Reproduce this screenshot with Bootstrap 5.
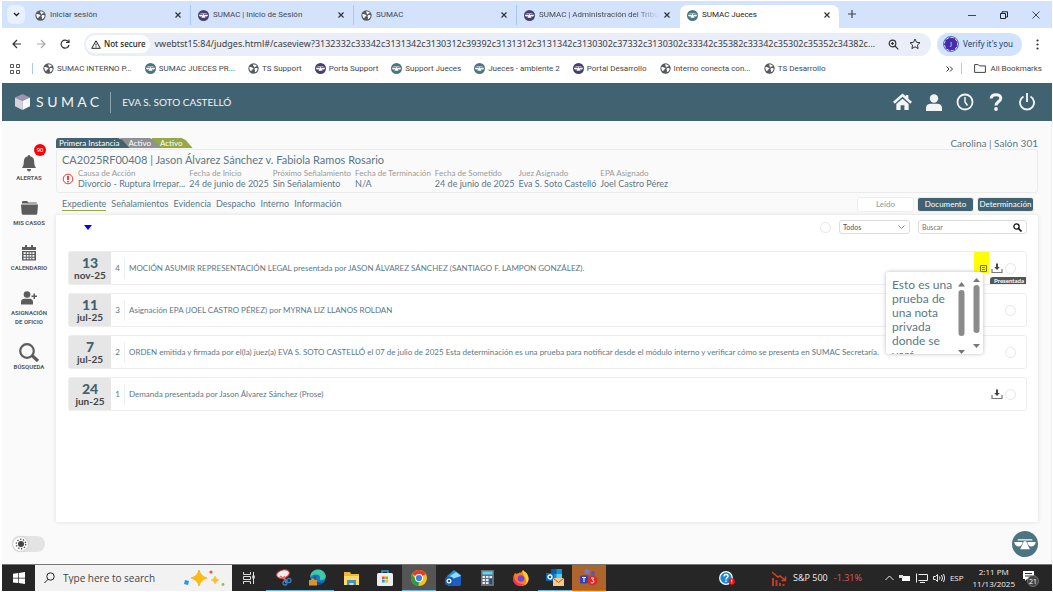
<!DOCTYPE html>
<html lang="es">
<head>
<meta charset="utf-8">
<meta name="viewport" content="width=device-width, initial-scale=1">
<title>SUMAC Jueces</title>
<link href="https://cdn.jsdelivr.net/npm/bootstrap@5.3.0/dist/css/bootstrap.min.css" rel="stylesheet">
<style>
:root{--teal:#416271;--ink:#5b7886;--icon:#5c5c5c}
body{font-family:Roboto,"Noto Sans",sans-serif;font-size:8px;line-height:12px;color:#45484c;background:#fff;padding:1px 1px 1px 2px}
button,a{color:inherit;text-decoration:none}
a:hover{color:inherit}
button{background:none;border:0;padding:0;line-height:inherit}
svg{display:block;flex:none}
.fav{width:11px;height:11px}
/* browser chrome */
.tabstrip{background:#d3e3fd;height:27px;padding:4px 4px 0 5px}
.chev-btn{width:18px;height:19px;border-radius:6px;background:#e9f1fe}
.tabs-run{margin-left:3px}
.tab-item{flex:0 1 163px;min-width:0;height:20px;padding:0 8px 0 7px;border-right:1px solid #a8c7fa}
.tab-item>span{min-width:0}
.tab-item:nth-child(4){border-color:transparent}
.tab-now{background:#fff;border:0;border-radius:7px 7px 0 0;height:23px;padding-bottom:3px;flex-basis:159px;color:#222}
.fade-end{-webkit-mask-image:linear-gradient(90deg,#000 80%,transparent);mask-image:linear-gradient(90deg,#000 80%,transparent)}
.addr{height:32px;padding:0 13px 0 10px}
.addr-nav{gap:14px;margin-right:14px}
.omni{background:#e9eef8;border-radius:12px;height:23px;padding:0 10px 0 2px}
.secure{background:#fff;border-radius:10px;height:18px;font:500 8px/18px "Noto Sans",sans-serif;color:#222;padding:0 5px;gap:3px}
.omni input{border:0;background:none;font:9px/18px "Noto Sans",sans-serif;color:#3c4043;padding:0;outline:0;text-overflow:ellipsis}
.omni-tools{gap:10px;margin-left:13px}
.verify{background:#d3e3fd;border-radius:12px;height:23px;font:8px/12px "Noto Sans",sans-serif;color:#20406f;padding:0 9px 0 7px;gap:5px;margin:0 14px 0 6px}
.avatar{width:14px;height:14px;border-radius:50%;background:#4b2aa8;border:1px dashed #d3e3fd;outline:1px solid #4b6fc0;color:#fff;font-size:6px;line-height:12px}
.bookmarks{height:23px;padding:0 10px 6px 8px}
.bm{display:flex;align-items:center;gap:3px;margin-right:13px;white-space:nowrap}
.vline{width:1px;height:11px;background:#a8c7fa}
.vline.first{margin:0 10px 0 12px}
/* application */
.app-head{background:var(--teal);height:38px;color:#f4f4f4;padding:0 10px 0 13px;font-family:Lato,sans-serif}
.brand{font-size:14px;margin-left:6px}
.brand-rule{width:1px;height:21px;background:#8fa4ad;margin:0 11px}
.who{font-size:10px}
.app-tools button{width:31px;display:flex;justify-content:center}
.app-main{background:#fafafa;color:var(--ink);font-family:Lato,"Noto Sans",sans-serif;border-right:1px solid #eee}
.side{width:54px;color:var(--icon);padding-top:32px}
.side>a{font:700 6px/9px Roboto,sans-serif;text-align:center;margin-bottom:16px}
.side i{display:flex;height:20px;align-items:center;justify-content:center}
.alert-count{position:absolute;left:32px;top:-9px;width:12px;height:12px;border-radius:50%;background:red;color:#fff;font:6px/12px Roboto,sans-serif}
.work{padding:16px 13px 0 0}
.folder{height:11px;font-size:8px;line-height:10px;color:#fff}
.folder span{height:10px;clip-path:polygon(0 0,calc(100% - 11px) 0,calc(100% - 7px) 2px,100% 100%,0 100%);padding:0 10px 0 3px;margin-right:-9px;position:relative}
.f1{background:var(--teal);border-radius:3px 0 0;z-index:3}
.folder .f2{background:#8f9293;z-index:2;padding-left:8px}
.folder .f3{background:#95a843;z-index:1;padding-left:8px}
.room{font-size:10px}
.case-box{border:1px solid #ebebeb;border-radius:3px;height:44px;padding:2px 5px}
.case-title{font-size:11px;line-height:15px;margin:0 0 2px;font-weight:400}
.facts{font-size:9px;line-height:11px}
.facts>div{margin-right:4px;white-space:nowrap}
.facts dt{font-weight:400;font-size:8px;color:#999b98;line-height:9px}
.facts dd{margin:0}
.section-nav{font-size:9px;line-height:12px;height:22px}
.links{gap:5px;padding-left:6px}
.section-nav .now{border-bottom:1px solid #95a843}
.acts{gap:3px}
.act{width:57px;height:15px;border-radius:3px;background:var(--teal);color:#fff;font-size:8px;line-height:13px;border:1px solid #eee}
.act.plain{background:#fff;color:#8799a1}
.sheet{background:#fff;box-shadow:0 0 4px #ddd;border-radius:2px;height:307px;padding:5px 11px 0 12px}
.tick{appearance:none;width:11px;height:11px;border:1px solid #e6e6e6;border-radius:50%;background:#fff;margin:0;flex:none}
.field{height:14px;border:1px solid #ddd;border-radius:3px;background:#fff}
.field select,.field input{border:0;background:none;font-size:7px;line-height:12px;height:12px;min-width:0;padding:0 3px;outline:0;color:#555;appearance:none}
.sel{width:71px}
.srch{width:109px}
.list{margin-top:17px}
.entry{height:34px;border:1px solid #eee;border-radius:3px;position:relative;background:#fff}
.desc{white-space:nowrap}
.tools{gap:2px;padding-right:10px}
.stamp{width:42px;background:#e6e6e6;color:#444;font-weight:700;font-size:10px;line-height:12px;text-align:center;padding-top:4px}
.stamp b{display:block;font-size:14px;line-height:13px;color:var(--teal)}
.num{width:14px;height:21px;line-height:21px;border-right:1px solid #eee;text-align:center}
.flag{position:absolute;right:0;bottom:0;background:#555;color:#fff;font-size:6px;line-height:7px;padding:0 2px 0 4px;border-radius:3px 0 0;font-weight:700}
.mark-note{position:absolute;right:37px;top:0;width:15px;height:21px;background:#ff0;padding:11px 0 0 6px}
.note{position:absolute;z-index:5;right:43px;top:20px;width:97px;height:82px;background:#fff;box-shadow:0 0 4px #bbb;border-radius:3px;overflow:hidden;padding:6px 0 0 6px;font-size:12px;line-height:14px}
.foot{padding:0 13px 7px 10px}
.switch-pill{width:33px;height:16px;border-radius:8px;background:#e3e3e3;padding:1px}
.switch-pill span{width:15px;height:14px;border-radius:50%;background:#fff;box-shadow:0 0 2px #aaa}
/* taskbar */
.taskbar{background:#262626;height:27px;color:#eee;border-top:1px solid #777;font-family:"Open Sans",sans-serif}
.start{width:33px}
.find{width:197px;background:#f2f2f2;color:#444;padding:0 7px 0 9px}
.find input{border:0;background:none;font-size:10px;padding:0;color:#444;outline:0}
.find input::placeholder{color:#444;opacity:1}
.slot{width:34px;height:26px;display:flex;align-items:center;justify-content:center}
.slot.open{border-bottom:1px solid #6cb0ea}
.slot.front{background:#555;border-bottom:1px solid #6cb0ea}
.slot.ping{background:#ad652c;border-bottom:1px solid #f60}
.tray{gap:5px;padding-right:13px}
.stock{gap:6px;font-size:9px;margin:0 18px 0 32px}
.down{color:#e05a5a}
.clock{line-height:12px;margin:0 2px 0 4px}
</style>
</head>
<body class="min-vh-100 d-flex flex-column">
<svg width="0" height="0" class="position-absolute" aria-hidden="true">
<symbol id="globe" viewBox="0 0 16 16"><circle cx="8" cy="8" r="7.500" fill="#56595d"/><path d="M2 6c2-.5 3 .8 5 1 1.500.2 1 2-.5 2.500-1.500.5-1 2-2 2.500C3 11 2 9 2 6ZM7 2.500c2-1 5-.2 6 2-1 1-2 .2-3 1.500-1 .8-2-.2-1.500-1C9 4 7.500 4 7 2.500ZM10 8c1.500-1 3-.5 4 0 0 3-2 5-4 5.500-.5-1.500 1-2 0-3-.6-.8-.8-1.800 0-2.500Z" fill="#fff"/></symbol>
<symbol id="scales" viewBox="0 0 16 16"><circle cx="8" cy="8" r="8" fill="currentColor"/><path d="M3.500 5h9v.8h-9zM1.400 6.800h5.200C6.300 8.800 5 9.600 4 9.600s-2.300-.8-2.600-2.800ZM9.400 6.800h5.200c-.3 2-1.600 2.800-2.600 2.800s-2.300-.8-2.600-2.800ZM7.300 6.300h1.400l2.300 5H5z" fill="#fff"/></symbol>
<symbol id="x" viewBox="0 0 8 8"><path d="M1.500 1.500l5 5M6.500 1.500l-5 5" stroke="#333" stroke-width="1.200"/></symbol>
<symbol id="dl" viewBox="0 0 12 12"><path d="M1 7v3.500h10V7" fill="none" stroke="#777" stroke-width="1.200"/><path d="M5 1.500h2V5h1.800L6 8 3.200 5H5z" fill="#444"/></symbol>
</svg>

<header>
<div class="tabstrip d-flex">
<button class="chev-btn d-flex align-items-center justify-content-center" aria-label="Buscar pestañas"><svg width="7" height="5" viewBox="0 0 7 5"><path d="M1 1l2.500 2.500L6 1" fill="none" stroke="#222" stroke-width="1.300"/></svg></button>
<div class="tabs-run d-flex flex-grow-1">
<div class="tab-item d-flex align-items-center gap-1"><svg class="fav"><use href="#globe"/></svg><span class="flex-grow-1">Iniciar sesión</span><svg width="8" height="8"><use href="#x"/></svg></div>
<div class="tab-item d-flex align-items-center gap-1"><svg class="fav" color="#45406c"><use href="#scales"/></svg><span class="flex-grow-1">SUMAC | Inicio de Sesión</span><svg width="8" height="8"><use href="#x"/></svg></div>
<div class="tab-item d-flex align-items-center gap-1"><svg class="fav"><use href="#globe"/></svg><span class="flex-grow-1">SUMAC</span><svg width="8" height="8"><use href="#x"/></svg></div>
<div class="tab-item d-flex align-items-center gap-1"><svg class="fav" color="#45406c"><use href="#scales"/></svg><span class="flex-grow-1 text-nowrap overflow-hidden fade-end">SUMAC | Administración del Tribunal</span><svg width="8" height="8"><use href="#x"/></svg></div>
<div class="tab-item tab-now d-flex align-items-center gap-1"><svg class="fav" color="#4d7482"><use href="#scales"/></svg><span class="flex-grow-1">SUMAC Jueces</span><svg width="8" height="8"><use href="#x"/></svg></div>
<button class="ms-2 align-self-start pt-1" aria-label="Nueva pestaña"><svg width="10" height="10" viewBox="0 0 10 10"><path d="M5 1v8M1 5h8" stroke="#444" stroke-width="1.200"/></svg></button>
</div>
<div class="d-flex align-items-center gap-4 pb-1 pe-2">
<button aria-label="Minimizar"><svg width="8" height="8"><path d="M0 4.500h8" stroke="#444"/></svg></button>
<button aria-label="Restaurar"><svg width="8" height="8"><path d="M.5 2.500h5v5h-5zM2 2.500V.8h5.500V6H6" fill="none" stroke="#222"/></svg></button>
<button aria-label="Cerrar"><svg width="8" height="8"><path d="M.5.5l7 7M7.500.5l-7 7" stroke="#333" stroke-width=".9"/></svg></button>
</div>
</div>

<div class="addr d-flex align-items-center">
<div class="addr-nav d-flex align-items-center">
<svg width="10" height="10" viewBox="0 0 10 10"><path d="M5 1L1 5l4 4M1 5h8" fill="none" stroke="#333" stroke-width="1.200"/></svg>
<svg width="10" height="10" viewBox="0 0 10 10"><path d="M5 1l4 4-4 4M9 5H1" fill="none" stroke="#aaa" stroke-width="1.200"/></svg>
<svg width="10" height="10" viewBox="0 0 10 10"><path d="M8.500 3A4 4 0 1 0 9 6M9 .5v3H6" fill="none" stroke="#333" stroke-width="1.200"/></svg>
</div>
<div class="omni d-flex align-items-center flex-grow-1">
<span class="secure d-flex align-items-center"><svg width="10" height="9" viewBox="0 0 10 9"><path d="M5 .8L9.300 8.300H.7zM5 3.500v2.200M5 6.400v1" fill="none" stroke="#222"/></svg>Not secure</span>
<input class="flex-grow-1 ms-1" aria-label="Dirección" value="vwebtst15:84/judges.html#/caseview?3132332c33342c3131342c3130312c39392c3131312c3131342c3130302c37332c3130302c33342c35382c33342c35302c35352c34382c33312c3131">
<div class="omni-tools d-flex align-items-center">
<svg width="11" height="11" viewBox="0 0 11 11"><circle cx="4.500" cy="4.500" r="3.300" fill="none" stroke="#333" stroke-width="1.200"/><path d="M7 7l3.300 3.300M3 4.500h3M4.500 3v3" stroke="#333" stroke-width="1.200"/></svg>
<svg width="12" height="12" viewBox="0 0 12 12"><path d="M6 1l1.500 3.300 3.500.4-2.600 2.400.7 3.500L6 8.800l-3.100 1.800.7-3.500L1 4.700l3.500-.4z" fill="none" stroke="#333"/></svg>
</div>
</div>
<button class="verify d-flex align-items-center"><span class="avatar">J</span>Verify it's you</button>
<svg width="3" height="11" fill="#333"><circle cx="1.500" cy="1.500" r="1.100"/><circle cx="1.500" cy="5.500" r="1.100"/><circle cx="1.500" cy="9.500" r="1.100"/></svg>
</div>

<nav class="bookmarks d-flex align-items-center">
<svg width="10" height="10" viewBox="0 0 10 10"><path d="M.5.5h3v3h-3zM6.500.5h3v3h-3zM.5 6.500h3v3h-3zM6.500 6.500h3v3h-3z" fill="none" stroke="#555"/></svg>
<span class="vline first"></span>
<div class="d-flex flex-grow-1">
<a href="#" class="bm"><svg class="fav"><use href="#globe"/></svg>SUMAC INTERNO P...</a>
<a href="#" class="bm"><svg class="fav" color="#4d7482"><use href="#scales"/></svg>SUMAC JUECES PR...</a>
<a href="#" class="bm"><svg class="fav"><use href="#globe"/></svg>TS Support</a>
<a href="#" class="bm"><svg class="fav" color="#45406c"><use href="#scales"/></svg>Porta Support</a>
<a href="#" class="bm"><svg class="fav" color="#4d7482"><use href="#scales"/></svg>Support Jueces</a>
<a href="#" class="bm"><svg class="fav" color="#4d7482"><use href="#scales"/></svg>Jueces - ambiente 2</a>
<a href="#" class="bm"><svg class="fav" color="#45406c"><use href="#scales"/></svg>Portal Desarrollo</a>
<a href="#" class="bm"><svg class="fav"><use href="#globe"/></svg>Interno conecta con...</a>
<a href="#" class="bm"><svg class="fav"><use href="#globe"/></svg>TS Desarrollo</a>
</div>
<svg width="7" height="6" viewBox="0 0 7 6"><path d="M.5.5L3 3 .5 5.500M4 .5L6.500 3 4 5.500" fill="none" stroke="#333"/></svg>
<span class="vline mx-2"></span>
<a href="#" class="d-flex align-items-center gap-1 ms-1"><svg width="12" height="9" viewBox="0 0 12 9"><path d="M.6.6h3.600l1.200 1.300h6v6.500H.6z" fill="none" stroke="#444"/></svg>All Bookmarks</a>
</nav>

<div class="app-head d-flex align-items-center">
<svg width="15" height="16" viewBox="0 0 15 16"><path d="M7.500 0L15 3.500 7.500 7 0 3.500z" fill="#9b96ab"/><path d="M0 3.500L7.500 7v9L0 12.200z" fill="#d5d2dc"/><path d="M15 3.500L7.500 7v9l7.500-3.800z" fill="#f8f8fa"/></svg>
<span class="brand">S U M A C</span><span class="brand-rule"></span><span class="who">EVA S. SOTO CASTELLÓ</span>
<div class="d-flex align-items-center ms-auto app-tools">
<button aria-label="Inicio"><svg width="19" height="18" viewBox="0 0 20 18" fill="currentColor"><path d="M10 0l3.500 3V1.500h2.700v4L20 8.800 18.200 10.800 10 3.600 1.800 10.800 0 8.800z"/><path d="M10 5.500l6.500 5.700v6.300h-4.500V12.500H8v5H3.500v-6.300z"/></svg></button>
<button aria-label="Usuario"><svg width="16" height="17" viewBox="0 0 16 17" fill="currentColor"><circle cx="8" cy="4.500" r="4.200"/><path d="M0 17v-3c0-3 2-4.300 5-4.300h6c3 0 5 1.300 5 4.300v3z"/></svg></button>
<button aria-label="Historial"><svg width="18" height="18" viewBox="0 0 18 18"><circle cx="9" cy="9" r="7.500" fill="none" stroke="currentColor" stroke-width="1.800"/><path d="M9 4v5l2.500 3.500" fill="none" stroke="currentColor" stroke-width="1.500"/></svg></button>
<button aria-label="Ayuda"><svg width="14" height="18" viewBox="0 0 14 18"><path d="M2.200 5.500C2.500.5 11.800.5 11.800 5.200c0 3.300-4.800 3.300-4.800 7.300" fill="none" stroke="currentColor" stroke-width="3"/><circle cx="7" cy="16" r="1.900" fill="currentColor"/></svg></button>
<button aria-label="Salir"><svg width="16" height="18" viewBox="0 0 16 18"><path d="M4.500 3.500a7 7 0 1 0 7 0M8 0v9" fill="none" stroke="currentColor" stroke-width="1.900"/></svg></button>
</div>
</div>
</header>

<main class="app-main d-flex flex-column flex-grow-1">
<div class="d-flex">
<nav class="side d-flex flex-column">
<a href="#" class="position-relative"><i><svg width="14" height="17" viewBox="0 0 14 17" fill="currentColor"><path d="M7 0c.8 0 1.200.6 1.200 1.300 3 .7 4 3 4 5.700 0 3 .6 4.500 1.800 6H0c1.200-1.500 1.800-3 1.800-6 0-2.700 1-5 4-5.700C5.800.6 6.200 0 7 0ZM5 14h4c0 1.600-.8 2.500-2 2.500S5 15.600 5 14Z"/></svg></i><span class="alert-count">90</span>ALERTAS</a>
<a href="#"><i><svg width="17" height="14" viewBox="0 0 17 14" fill="currentColor"><path d="M1 1q0-1 1-1h4l1.500 1.500H15q1 0 1 1H1zM0 3.500h17l-.7 9q-.1 1.200-1.300 1.200H2q-1.200 0-1.300-1.200z"/></svg></i>MIS CASOS</a>
<a href="#"><i><svg width="14" height="16" viewBox="0 0 14 16" fill="currentColor"><path d="M3 0h2v2h4V0h2v2h3v3H0V2h3zM0 6h14v9.500H0zM1.500 7.200v1.800h2.300V7.200zm3.300 0v1.800h1.800V7.200zm2.800 0v1.800h1.800V7.200zm2.800 0v1.800h2V7.200zM1.500 10v1.700h2.300V10zm3.300 0v1.700h1.800V10zm2.800 0v1.700h1.800V10zm2.800 0v1.700h2V10zM1.500 12.700v1.500h2.300v-1.500zm3.300 0v1.500h1.800v-1.500zm2.800 0v1.500h1.800v-1.500zm2.800 0v1.500h2v-1.500z" fill-rule="evenodd"/></svg></i>CALENDARIO</a>
<a href="#"><i><svg width="16" height="14" viewBox="0 0 16 14" fill="currentColor"><circle cx="6" cy="3.500" r="3.300"/><path d="M0 13.500V11c0-2.300 1.600-3.200 3.500-3.200h5c2 0 3.500.9 3.500 3.200v2.500zM12.500 2.500H14v2h2V6h-2v2h-1.500V6h-2V4.500h2z"/></svg></i>ASIGNACIÓN<br>DE OFICIO</a>
<a href="#"><i><svg width="20" height="19" viewBox="0 0 20 19"><circle cx="8" cy="8" r="6.800" fill="none" stroke="currentColor" stroke-width="2.200"/><path d="M13 12.500l6 5.500" stroke="currentColor" stroke-width="3.200"/></svg></i>BÚSQUEDA</a>
</nav>

<div class="work flex-grow-1">
<div class="d-flex justify-content-between">
<div class="folder d-flex align-items-end"><span class="f1">Primera Instancia</span><span class="f2">Activo</span><span class="f3">Activo</span></div>
<div class="room">Carolina | Salón 301</div>
</div>
<section class="case-box">
<h1 class="case-title">CA2025RF00408 | Jason Álvarez Sánchez v. Fabiola Ramos Rosario</h1>
<dl class="facts d-flex mb-0">
<svg class="me-1 align-self-center" width="12" height="12" viewBox="0 0 12 12"><circle cx="6" cy="6" r="4.800" fill="none" stroke="#f33"/><path d="M6 3v4M6 8v1.200" stroke="#e00" stroke-width="1.500"/></svg>
<div><dt>Causa de Acción</dt><dd>Divorcio - Ruptura Irrepar...</dd></div>
<div><dt>Fecha de Inicio</dt><dd>24 de junio de 2025</dd></div>
<div><dt>Próximo Señalamiento</dt><dd>Sin Señalamiento</dd></div>
<div><dt>Fecha de Terminación</dt><dd>N/A</dd></div>
<div><dt>Fecha de Sometido</dt><dd>24 de junio de 2025</dd></div>
<div><dt>Juez Asignado</dt><dd>Eva S. Soto Castelló</dd></div>
<div><dt>EPA Asignado</dt><dd>Joel Castro Pérez</dd></div>
</dl>
</section>
<div class="section-nav d-flex align-items-center">
<nav class="d-flex links"><a href="#" class="now">Expediente</a><a href="#">Señalamientos</a><a href="#">Evidencia</a><a href="#">Despacho</a><a href="#">Interno</a><a href="#">Información</a></nav>
<div class="d-flex ms-auto pe-1 acts"><button class="act plain">Leído</button><button class="act">Documento</button><button class="act">Determinación</button></div>
</div>
<section class="sheet">
<div class="d-flex align-items-center">
<svg class="ms-3" width="8" height="5"><path d="M0 0h8L4 5z" fill="#00f"/></svg>
<input type="checkbox" class="tick ms-auto me-2" aria-label="Seleccionar todos">
<div class="field d-flex align-items-center me-2 pe-1 sel"><select class="flex-grow-1" aria-label="Filtro"><option>Todos</option></select><svg width="7" height="5"><path d="M.5.5l3 3 3-3" fill="none" stroke="#888"/></svg></div>
<div class="field d-flex align-items-center pe-1 srch"><input class="flex-grow-1" placeholder="Buscar" aria-label="Buscar"><svg width="9" height="9"><circle cx="3.500" cy="3.500" r="2.600" fill="none" stroke="#111" stroke-width="1.300"/><path d="M5.500 5.500L8.500 8.500" stroke="#111" stroke-width="1.700"/></svg></div>
</div>
<div class="d-flex flex-column gap-2 list">
<article class="entry d-flex align-items-center">
<div class="stamp h-100"><b>13</b>nov-25</div><div class="num">4</div><div class="ps-1 desc">MOCIÓN ASUMIR REPRESENTACIÓN LEGAL presentada por JASON ÁLVAREZ SÁNCHEZ (SANTIAGO F. LAMPON GONZÁLEZ).</div>
<div class="ms-auto d-flex align-items-center tools"><svg width="12" height="12"><use href="#dl"/></svg><input type="checkbox" class="tick" aria-label="Seleccionar 4"></div>
<span class="flag">Presentada</span>
<button class="mark-note" aria-label="Nota privada"><svg width="7" height="7"><path d="M.5.5h6v6h-6zM2 2.500h3M2 4.500h3" fill="none" stroke="#77701a"/></svg></button>
<aside class="note d-flex"><div class="flex-grow-1">Esto es una prueba de una nota privada donde se verá</div>
<svg width="14" height="76" viewBox="0 0 14 76"><path d="M4 8.500h7L7.500 4zM4 72h7l-3.500 4z" fill="#777"/><rect x="4.500" y="12" width="6" height="46" rx="3" fill="#8b8b8b"/></svg>
<svg width="15" height="76" viewBox="0 0 15 76"><path d="M5 4h7L8.500 0zM5 66h7l-3.500 4z" fill="#777"/><rect x="5.500" y="7" width="6" height="48" rx="3" fill="#8b8b8b"/></svg></aside>
</article>
<article class="entry d-flex align-items-center">
<div class="stamp h-100"><b>11</b>jul-25</div><div class="num">3</div><div class="ps-1 desc">Asignación EPA (JOEL CASTRO PÉREZ) por MYRNA LIZ LLANOS ROLDAN</div>
<div class="ms-auto tools d-flex"><input type="checkbox" class="tick" aria-label="Seleccionar 3"></div>
</article>
<article class="entry d-flex align-items-center">
<div class="stamp h-100"><b>7</b>jul-25</div><div class="num">2</div><div class="ps-1 desc">ORDEN emitida y firmada por el(la) juez(a) EVA S. SOTO CASTELLÓ el 07 de julio de 2025 Esta determinación es una prueba para notificar desde el módulo interno y verificar cómo se presenta en SUMAC Secretaría.</div>
<div class="ms-auto tools d-flex"><input type="checkbox" class="tick" aria-label="Seleccionar 2"></div>
</article>
<article class="entry d-flex align-items-center">
<div class="stamp h-100"><b>24</b>jun-25</div><div class="num">1</div><div class="ps-1 desc">Demanda presentada por Jason Álvarez Sánchez (Prose)</div>
<div class="ms-auto d-flex align-items-center tools"><svg width="12" height="12"><use href="#dl"/></svg><input type="checkbox" class="tick" aria-label="Seleccionar 1"></div>
</article>
</div>
</section>
</div>
</div>
<div class="d-flex justify-content-between align-items-center mt-auto foot">
<button class="switch-pill d-flex" aria-label="Modo oscuro"><span class="d-flex align-items-center justify-content-center"><svg width="12" height="12" viewBox="0 0 12 12"><circle cx="6" cy="6" r="3" fill="#444"/><circle cx="6" cy="6" r="4.700" fill="none" stroke="#444" stroke-width="1.400" stroke-dasharray="1.300 1.650"/></svg></span></button>
<button aria-label="Asistente"><svg width="26" height="26" color="#4d7482"><use href="#scales"/></svg></button>
</div>
</main>

<footer class="taskbar d-flex align-items-center">
<button class="start d-flex justify-content-center" aria-label="Inicio de Windows"><svg width="12" height="12" viewBox="0 0 12 12" fill="#fff"><path d="M0 1.700L5 1v4.700H0zM5.700.9L12 0v5.700H5.700zM0 6.400h5v4.700l-5-.7zM5.700 6.400H12V12l-6.300-.9z"/></svg></button>
<div class="find d-flex align-items-center h-100"><svg width="11" height="12" viewBox="0 0 11 12"><circle cx="6.500" cy="4.500" r="3.700" fill="none" stroke="#222"/><path d="M4 7.300L.5 11" stroke="#222"/></svg><input class="ms-2 flex-grow-1 w-50" placeholder="Type here to search" aria-label="Type here to search">
<svg width="42" height="18" viewBox="0 0 42 18"><path d="M16 1q1.500 6.500 8 8-6.500 1.500-8 8-1.500-6.500-8-8 6.500-1.500 8-8Z" fill="#fbb913" stroke="#fbb913"/><path d="M32 7q.8 3.200 4 4-3.200.8-4 4-.8-3.200-4-4 3.200-.8 4-4Z" fill="#fbc02d" stroke="#fbc02d" stroke-width=".5"/><path d="M2 11l4 1-1 4-4-1z" fill="#1e9be8"/><circle cx="28" cy="3" r="1.600" fill="#f2572b"/><circle cx="40" cy="15.500" r="1.400" fill="#8bc34a"/></svg></div>
<div class="d-flex">
<button class="slot" aria-label="Vista de tareas"><svg width="12" height="12" viewBox="0 0 12 12" fill="none" stroke="#ddd"><path d="M.5 0v2.500h7V0M.5 12V9.500h7V12M.5 4.500h7v3h-7zM10.500 0v12"/><path d="M10.500 3.500v3" stroke-width="2.500"/></svg></button>
<button class="slot open" aria-label="Recortes"><svg width="17" height="17" viewBox="0 0 17 17"><ellipse cx="8" cy="5" rx="6.500" ry="4" fill="#eee" stroke="#d33" transform="rotate(-15 8 5)"/><path d="M5 7l7 5M9 7l2 7" stroke="#e66" stroke-width="1.500"/><circle cx="10" cy="14" r="2" fill="none" stroke="#2d84c7" stroke-width="1.300"/><circle cx="14" cy="11.500" r="2" fill="none" stroke="#2d84c7" stroke-width="1.300"/></svg></button>
<button class="slot open" aria-label="Edge"><svg width="17" height="17" viewBox="0 0 17 17"><circle cx="9" cy="8" r="7.800" fill="#1478c9"/><path d="M1.500 6C3-.5 15-2 16.800 7c.2 4-4.300 4.500-6.300 3.500 1.500-3-.5-5-3.500-5-2 0-4 .3-5.500 3z" fill="#42c9a0"/><path d="M7 7c-2 4 1 8 7.500 6-3 3.500-9 3-10 0C3.500 10 5 7.500 7 7Z" fill="#0d479b"/><path d="M0 11h8v5.500H0zM2.500 11V9.500h3V11" fill="#d6952b"/></svg></button>
<button class="slot" aria-label="Explorador"><svg width="15" height="13" viewBox="0 0 15 13"><path d="M0 0h6l1 2h8v11H0z" fill="#f3b62c"/><path d="M0 4h15v9H0z" fill="#ffd968"/><path d="M3 13V8h9v5H9.500v-2h-4v2z" fill="#3b94d9"/></svg></button>
<button class="slot" aria-label="Tienda"><svg width="16" height="16" viewBox="0 0 16 16"><path d="M5 4V1h6v3" fill="none" stroke="#2aa3d8" stroke-width="1.500"/><rect y="3" width="16" height="13" rx="1.500" fill="#eee"/><path d="M5 6.500h2.700v2.700H5z" fill="#f35325"/><path d="M8.300 6.500H11v2.700H8.300z" fill="#81bc06"/><path d="M5 9.800h2.700v2.700H5z" fill="#05a6f0"/><path d="M8.300 9.800H11v2.700H8.300z" fill="#ffba08"/></svg></button>
<button class="slot front" aria-label="Chrome"><svg width="16" height="16" viewBox="0 0 16 16"><circle cx="8" cy="8" r="8" fill="#fbc116"/><path d="M8 8L1.100 4A8 8 0 0 1 14.900 4z" fill="#e33b2e"/><path d="M1.100 4L5 10.500 8 12l-.6 4A8 8 0 0 1 1.100 4Z" fill="#259d4a"/><circle cx="8" cy="8" r="4" fill="#fff"/><circle cx="8" cy="8" r="3.100" fill="#3c7de6"/></svg></button>
<button class="slot" aria-label="Outlook nuevo"><svg width="17" height="17" viewBox="0 0 17 17"><path d="M2 6L9 0l7 5v8q0 3-3 3H4q-2 0-2-2z" fill="#2389e5"/><path d="M5 6l6-4 5 4-5 5z" fill="#8fdcff"/><path d="M4 10l12-4v7q0 3-3 3H4z" fill="#205cc2"/><rect y="7" width="8" height="8" rx="1.500" fill="#1559b5"/><circle cx="4" cy="11" r="1.900" fill="none" stroke="#fff" stroke-width="1.200"/></svg></button>
<button class="slot" aria-label="Calculadora"><svg width="13" height="16" viewBox="0 0 13 16"><path d="M0 0h13v16H0z" fill="#65707a"/><path d="M1.500 1.500h10v3h-10z" fill="#5fd3f4"/><path d="M1.500 6h2.500v2H1.500zM5 6h2.500v2H5zM8.500 6H11v2H8.500zM1.500 9h2.500v2H1.500zM5 9h2.500v2H5zM1.500 12h2.500v2H1.500zM5 12h2.500v2H5z" fill="#e8ecef"/><path d="M8.500 9H11v5H8.500z" fill="#174c86"/></svg></button>
<button class="slot" aria-label="Firefox"><svg width="16" height="16" viewBox="0 0 16 16"><path d="M2 3l2 1c1-1 2-1.500 4-1.500L10 0c1 2 3 2 4 4 4 6 0 12-6 12C2 16-2 10 2 3Z" fill="#ff7b1c"/><path d="M10 0c1 2 3 2 4 4 3 5 1 9-2 11 2-4 1-6-1-9-1-2-2-4-1-6Z" fill="#ffd12f"/><path d="M1 5c0 8 6 9 10 9-4 4-11 1-11-5z" fill="#f5325c"/><circle cx="8" cy="8.500" r="3.300" fill="#7545d5"/></svg></button>
<button class="slot open" aria-label="Outlook"><svg width="18" height="17" viewBox="0 0 18 17"><path d="M5 0h11v10H5z" fill="#1490df"/><path d="M5 0h5.500v5H5z" fill="#0b5ba8"/><path d="M10.500 5H16v5h-5.500z" fill="#50d0fa"/><path d="M0 4h8v8H0z" fill="#0f66b8"/><circle cx="4" cy="8" r="2" fill="none" stroke="#fff" stroke-width="1.300"/><path d="M7 9h11v8H7z" fill="#f6c98b"/><path d="M7 9l5.500 4.500L18 9" fill="none" stroke="#9c662d"/></svg></button>
<button class="slot ping" aria-label="Teams"><svg width="18" height="17" viewBox="0 0 18 17"><circle cx="7" cy="2.500" r="2.500" fill="#7377dc"/><circle cx="13" cy="4" r="2" fill="#5558bb"/><path d="M3 6h12v7H3z" fill="#5b60cf"/><rect y="6.500" width="8" height="8" rx="1" fill="#3b40a8"/><path d="M2 8.500h4M4 8.500v4.500" stroke="#fff"/><circle cx="12.500" cy="11.500" r="5" fill="#d52b29"/><path d="M11 9h3l-1.600 2c2.200 0 2 3-.2 3q-.9 0-1.500-.6" fill="none" stroke="#fff" stroke-width=".9"/></svg></button>
</div>
<div class="d-flex align-items-center ms-auto tray">
<button aria-label="Ayuda"><svg width="16" height="15" viewBox="0 0 16 15"><circle cx="7" cy="7" r="6.300" fill="#168ad6" stroke="#fff" stroke-width="1.300"/><path d="M5 5.500c0-3 4.500-2.500 4 0-.2 1.200-2 1.500-2 3M7 9.500V11" fill="none" stroke="#fff" stroke-width="1.400"/><circle cx="12.700" cy="10.500" r="3.200" fill="#e11"/><path d="M12.700 8.600v2.300M12.700 11.500v.8" stroke="#fff"/></svg></button>
<div class="d-flex align-items-center stock"><svg width="15" height="15" viewBox="0 0 15 15"><path d="M0 1l6 5 2-1 5 4M13.500 5.500v4h-4" fill="none" stroke="#d5401f" stroke-width="1.500"/><path d="M1 7v8M4.500 9v6M8 12v3M11.500 13v2" stroke="#c63a1c" stroke-width="2"/></svg><span>S&amp;P 500</span><span class="down">-1.31%</span></div>
<svg width="9" height="6"><path d="M.5 5L4.500 1l4 4" fill="none" stroke="#eee"/></svg>
<svg width="12" height="8"><path d="M3 2h8v5H3z" fill="#fff"/><path d="M0 1h4v3H0z" fill="#ddd"/></svg>
<svg width="12" height="10" fill="none" stroke="#eee"><path d="M2.500 1.500h9v6h-9M.5.5v9M4 9.500h5"/></svg>
<svg width="12" height="10" fill="none" stroke="#eee"><path d="M.5 3.500h2l2-2v7l-2-2h-2zM6.500 3.500q1 1.500 0 3M8.500 2q2 3 0 6M10.500 1q2.500 4 0 8"/></svg>
<span>ESP</span>
<div class="text-center clock">2:11 PM<br>11/13/2025</div>
<button aria-label="Notificaciones"><svg width="17" height="17" viewBox="0 0 17 17"><path d="M1 1h11v8H5l-2 2V9H1z" fill="#fff"/><path d="M3 3.500h7M3 6h7" stroke="#333"/><circle cx="11" cy="11" r="5.500" fill="#444" stroke="#888" stroke-width=".7"/><text x="11" y="13.500" font-size="7" fill="#fff" text-anchor="middle">21</text></svg></button>
</div>
</footer>
<script src="https://cdn.jsdelivr.net/npm/bootstrap@5.3.0/dist/js/bootstrap.bundle.min.js"></script>
</body>
</html>
